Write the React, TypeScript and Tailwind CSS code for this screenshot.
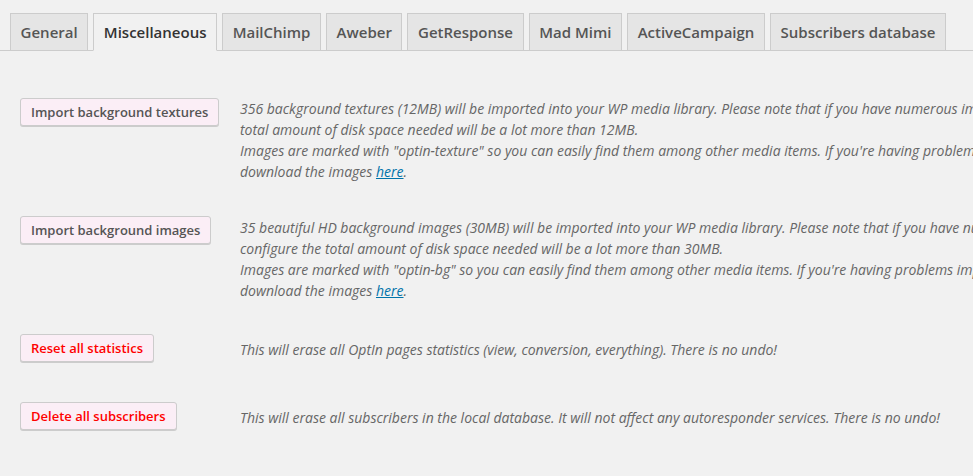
import React from "react";

const TABS = [
  "General",
  "Miscellaneous",
  "MailChimp",
  "Aweber",
  "GetResponse",
  "Mad Mimi",
  "ActiveCampaign",
  "Subscribers database",
];

function ActionButton({ label, danger }: { label: string; danger?: boolean }) {
  return (
    <button
      className={
        "h-[28px] px-[10px] shrink-0 rounded-[3px] border border-[#cccccc] bg-[#fbeef6] shadow-[0_1px_0_#cccccc] text-[13px] font-semibold not-italic leading-none whitespace-nowrap " +
        (danger ? "text-[#ff0000]" : "text-[#555555]")
      }
    >
      {label}
    </button>
  );
}

export default function App() {
  return (
    <div
      className="w-full h-[476px] overflow-hidden bg-[#f1f1f1]"
      style={{ fontFamily: '"Open Sans", "Liberation Sans", sans-serif' }}
    >
      {/* Tabs */}
      <div className="flex items-end gap-[5px] pl-[10px] pt-[13px] border-b border-[#cccccc]">
        {TABS.map((tab) => {
          const active = tab === "Miscellaneous";
          return (
            <div
              key={tab}
              className={
                "h-[38px] px-[9.6px] flex items-center border border-[#cccccc] text-[15px] font-semibold whitespace-nowrap -mb-px " +
                (active
                  ? "bg-[#f1f1f1] text-[#333333] border-b-[#f1f1f1]"
                  : "bg-[#e5e5e5] text-[#555555]")
              }
            >
              {tab}
            </div>
          );
        })}
      </div>

      {/* Rows */}
      <div className="pl-[20px] pt-[47px] text-[14px] italic text-[#666666] leading-[21px] whitespace-nowrap">
        <div className="flex items-start">
          <div className="w-[220px] shrink-0">
            <ActionButton label="Import background textures" />
          </div>
          <p className="mt-0">
            356 background textures (12MB) will be imported into your WP media library. Please note that if you have numerous image sizes configured the
            <br />
            total amount of disk space needed will be a lot more than 12MB.
            <br />
            Images are marked with "optin-texture" so you can easily find them among other media items. If you're having problems importing them you can
            <br />
            download the images{" "}
            <a href="#" className="text-[#0073aa] underline">
              here
            </a>
            .
          </p>
        </div>

        <div className="flex items-start mt-[34px]">
          <div className="w-[220px] shrink-0">
            <ActionButton label="Import background images" />
          </div>
          <p className="mt-[1px]">
            35 beautiful HD background images (30MB) will be imported into your WP media library. Please note that if you have numerous image sizes
            <br />
            configure the total amount of disk space needed will be a lot more than 30MB.
            <br />
            Images are marked with "optin-bg" so you can easily find them among other media items. If you're having problems importing them you can
            <br />
            download the images{" "}
            <a href="#" className="text-[#0073aa] underline">
              here
            </a>
            .
          </p>
        </div>

        <div className="flex items-start mt-[33px]">
          <div className="w-[220px] shrink-0">
            <ActionButton label="Reset all statistics" danger />
          </div>
          <p className="mt-[5px]">
            This will erase all OptIn pages statistics (view, conversion, everything). There is no undo!
          </p>
        </div>

        <div className="flex items-start mt-[40px]">
          <div className="w-[220px] shrink-0">
            <ActionButton label="Delete all subscribers" danger />
          </div>
          <p className="mt-[5px]">
            This will erase all subscribers in the local database. It will not affect any autoresponder services. There is no undo!
          </p>
        </div>
      </div>
    </div>
  );
}
